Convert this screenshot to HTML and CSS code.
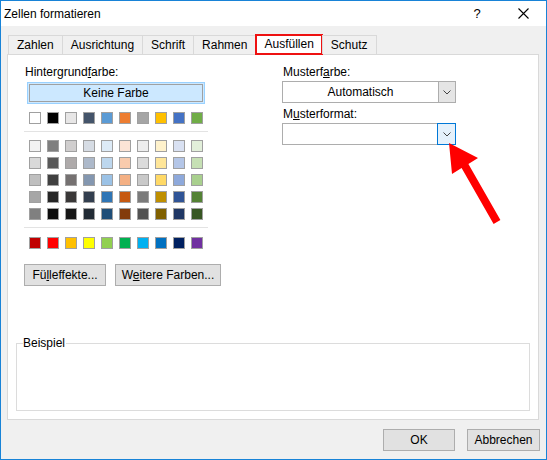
FILE: index.html
```html
<html>

<head>
    <meta charset="utf-8">
    <link rel="stylesheet" href="styles.css">
</head>

<body onload="fillPalette();">
    <div class="window">
        <div class="titlebar">
            <span class="title">Zellen formatieren</span>
            <span class="tbtn">?</span>
            <span class="tbtn">
                <svg width="11" height="11" viewBox="0 0 11 11"><path d="M0.5 0.5 L10.5 10.5 M10.5 0.5 L0.5 10.5" stroke="#000" stroke-width="1.1" fill="none"/></svg>
            </span>
        </div>

        <div class="tabs">
            <div class="tab">Zahlen</div>
            <div class="tab">Ausrichtung</div>
            <div class="tab">Schrift</div>
            <div class="tab">Rahmen</div>
            <div class="tab active">Ausfüllen</div>
            <div class="tab">Schutz</div>
        </div>

        <div class="panel">
            <div class="cols">
                <div class="left">
                    <div class="label">Hintergrund<u>f</u>arbe:</div>
                    <div class="nofill"><div>Keine Farbe</div></div>
                    <div class="swatches first" id="base"></div>
                    <div class="sep"></div>
                    <div class="rows" id="theme"></div>
                    <div class="sep"></div>
                    <div class="swatches std" id="std"></div>
                    <div class="btnrow">
                        <button class="btn w-fill">Fü<u>l</u>leffekte...</button>
                        <button class="btn w-more">W<u>e</u>itere Farben...</button>
                    </div>
                </div>
                <div class="right">
                    <div class="label">Musterf<u>a</u>rbe:</div>
                    <div class="combo">
                        <div class="combo-text">Automatisch</div>
                        <div class="combo-btn">
                            <svg width="8" height="5" viewBox="0 0 8 5"><polyline points="0.5,0.5 4,4 7.5,0.5" stroke="#444" fill="none"/></svg>
                        </div>
                    </div>
                    <div class="label gap">M<u>u</u>sterformat:</div>
                    <div class="combo">
                        <div class="combo-text"></div>
                        <div class="combo-btn focus">
                            <svg width="8" height="5" viewBox="0 0 8 5"><polyline points="0.5,0.5 4,4 7.5,0.5" stroke="#444" fill="none"/></svg>
                        </div>
                    </div>
                </div>
            </div>

            <fieldset class="sample">
                <legend>Beispiel</legend>
            </fieldset>
        </div>

        <div class="footer">
            <button class="btn w-ok">OK</button>
            <button class="btn w-cancel">Abbrechen</button>
        </div>

        <!-- annotation arrow -->
        <svg class="arrow" width="70" height="95" viewBox="0 0 70 95">
            <polygon points="9,8 38,23 28.4,29 60.4,85 53.6,89 21.6,33 12,39" fill="#ff0000"/>
        </svg>
    </div>

    <script>
        let base = ['#ffffff', '#000000', '#e7e6e6', '#44546a', '#5b9bd5', '#ed7d31', '#a5a5a5', '#ffc000', '#4472c4', '#70ad47']
        let theme = [
            ['#f2f2f2', '#7f7f7f', '#d0cece', '#d6dce4', '#ddebf7', '#fce4d6', '#ededed', '#fff2cc', '#d9e1f2', '#e2efda'],
            ['#d9d9d9', '#595959', '#aeaaaa', '#adb9ca', '#bdd7ee', '#f8cbad', '#dbdbdb', '#ffe699', '#b4c6e7', '#c6e0b4'],
            ['#bfbfbf', '#404040', '#757171', '#8497b0', '#9bc2e6', '#f4b084', '#c9c9c9', '#ffd966', '#8ea9db', '#a9d08e'],
            ['#a6a6a6', '#262626', '#3a3838', '#333f4f', '#2f75b5', '#c65911', '#7b7b7b', '#bf8f00', '#305496', '#548235'],
            ['#808080', '#0d0d0d', '#161616', '#222b35', '#1f4e78', '#833c0c', '#525252', '#806000', '#203764', '#375623']
        ]
        let std = ['#c00000', '#ff0000', '#ffc000', '#ffff00', '#92d050', '#00b050', '#00b0f0', '#0070c0', '#002060', '#7030a0']

        function swatch(color) {
            let sw = document.createElement('div')
            sw.className = 'sw'
            sw.style.background = color
            return sw
        }

        function fillRow(el, colors) {
            for (c of colors) el.append(swatch(c))
        }

        function fillPalette() {
            fillRow(document.getElementById('base'), base)
            fillRow(document.getElementById('std'), std)

            let rows = document.getElementById('theme')
            for (line of theme) {
                let r = document.createElement('div')
                r.className = 'swatches'
                fillRow(r, line)
                rows.append(r)
            }
        }
    </script>
</body>

</html>
```

FILE: styles.css
```css
body {
    margin: 0;
    font-family: "Liberation Sans", Arial, sans-serif;
    font-size: 12px;
    color: #000;
}

.window {
    position: relative;
    width: 547px;
    height: 460px;
    box-sizing: border-box;
    border: 1px solid #1883d7;
    background: #f0f0f0;
}

.titlebar {
    display: flex;
    align-items: center;
    height: 25px;
    background: #fff;
}

.title {
    flex: 1;
    padding-left: 3px;
}

.tbtn {
    width: 46px;
    height: 25px;
    display: flex;
    align-items: center;
    justify-content: center;
    font-size: 13px;
}

/* tabs */

.tabs {
    display: flex;
    align-items: flex-end;
    height: 21px;
    margin-top: 7px;
    padding-left: 7px;
    position: relative;
    z-index: 1;
}

.tab {
    height: 19px;
    line-height: 19px;
    box-sizing: border-box;
    padding: 0 8px;
    border: 1px solid #d9d9d9;
    border-bottom: none;
    margin-left: -1px;
    background: #f0f0f0;
}

.tab:first-child {
    margin-left: 0;
}

.tab.active {
    height: 21px;
    line-height: 17px;
    padding: 0 7px;
    margin-bottom: -1px;
    border: 2px solid #ee1111;
    background: #fff;
}

/* panel */

.panel {
    height: 366px;
    box-sizing: border-box;
    margin: 0 7px 0 6px;
    padding: 10px 8px 0 8px;
    background: #fff;
    border: 1px solid #d9d9d9;
}

.cols {
    display: flex;
    padding-left: 8px;
}

.left {
    width: 258px;
}

.right {
    width: 174px;
}

.label {
    line-height: 15px;
    padding-left: 1px;
}

.label.gap {
    margin-top: 4px;
}

.nofill {
    width: 178px;
    height: 22px;
    box-sizing: border-box;
    margin: 2px 0 0 3px;
    padding: 1px;
    border: 1px solid #99d1ff;
    background: #cce8ff;
}

.nofill div {
    height: 100%;
    box-sizing: border-box;
    border: 1px solid #a0a0a0;
    text-align: center;
    line-height: 16px;
}

.swatches {
    display: flex;
    gap: 6px;
    margin-left: 5px;
}

.swatches.first {
    margin-top: 8px;
}

.rows {
    display: flex;
    flex-direction: column;
    gap: 5px;
}

.sw {
    width: 12px;
    height: 12px;
    box-sizing: border-box;
    border: 1px solid #a0a0a0;
}

.sep {
    width: 184px;
    height: 1px;
    background: #e3e3e3;
    margin: 7px 0 8px 0;
}

.sep + .std {
    margin-top: 9px;
}

.btnrow {
    display: flex;
    gap: 9px;
    margin-top: 15px;
}

.btn {
    height: 22px;
    box-sizing: border-box;
    padding: 0;
    border: 1px solid #adadad;
    background: #e1e1e1;
    font-family: inherit;
    font-size: 12px;
    color: #000;
}

.w-fill {
    width: 82px;
}

.w-more {
    width: 106px;
}

.w-ok {
    width: 72px;
}

.w-cancel {
    width: 73px;
}

/* combo boxes */

.combo {
    display: flex;
    height: 22px;
    box-sizing: border-box;
    margin-top: 1px;
    border: 1px solid #adadad;
    background: #fff;
}

.combo-text {
    flex: 1;
    text-align: center;
    line-height: 20px;
}

.combo-btn {
    width: 16px;
    display: flex;
    align-items: center;
    justify-content: center;
    border-left: 1px solid #adadad;
    background: #e5e5e5;
}

.combo-btn.focus {
    width: 17px;
    margin: -1px -1px -1px 0;
    border: 1px solid #0078d7;
    background: #e5f1fb;
}

/* Beispiel */

.sample {
    height: 75px;
    box-sizing: border-box;
    margin: 50px 0 0 0;
    padding: 0;
    border: 1px solid #dcdcdc;
}

.sample legend {
    margin-left: 6px;
    padding: 0 1px 0 0;
    line-height: 15px;
}

.footer {
    display: flex;
    justify-content: flex-end;
    gap: 12px;
    padding: 9px 6px 0 0;
}

.arrow {
    position: absolute;
    left: 439px;
    top: 134px;
}
```
